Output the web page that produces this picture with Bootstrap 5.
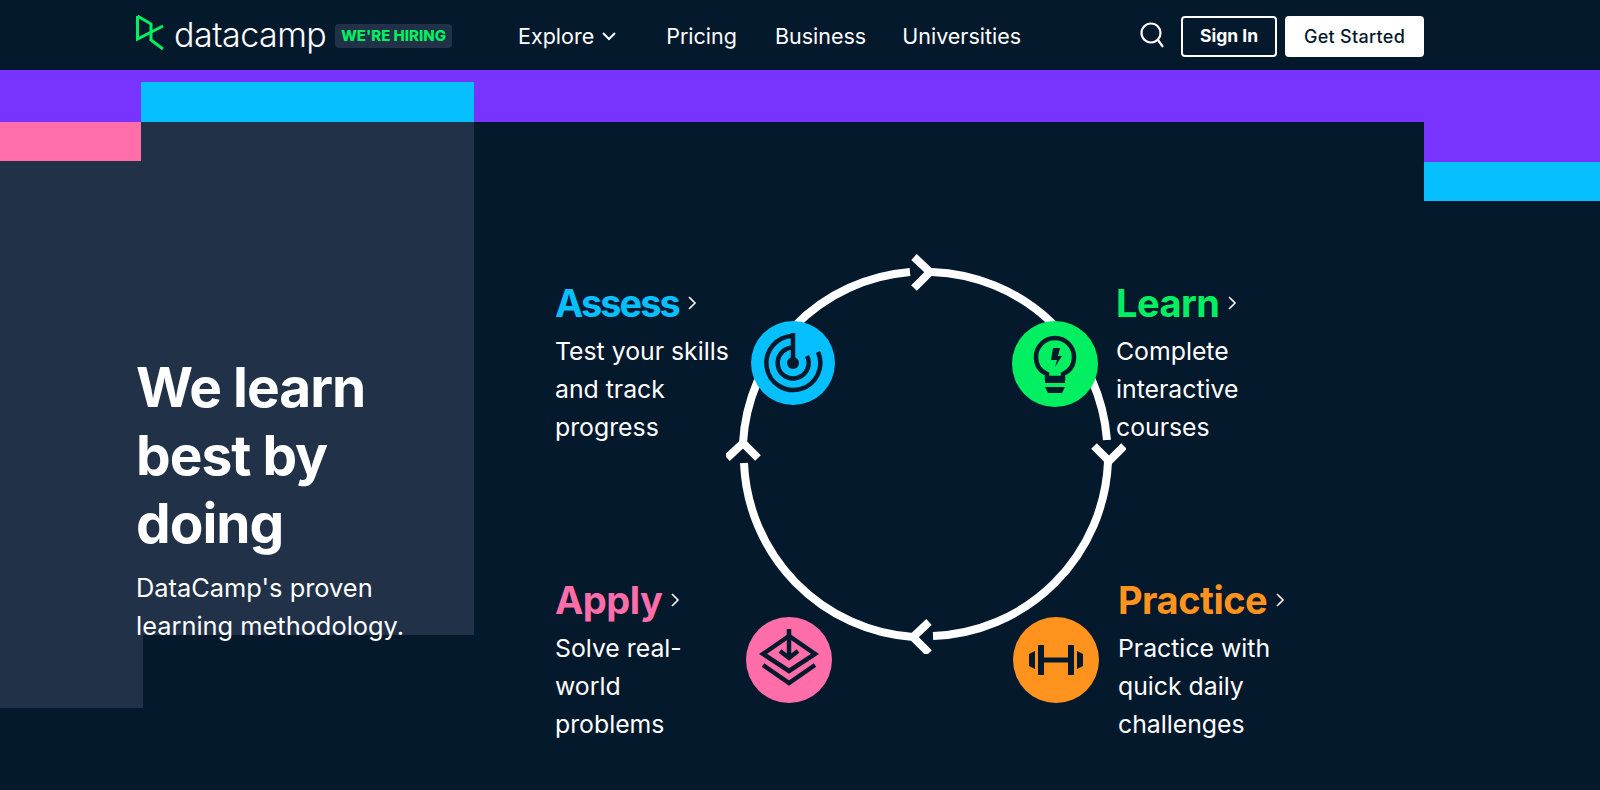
<!DOCTYPE html>
<html lang="en">
<head>
    <meta charset="UTF-8">
    <meta name="viewport" content="width=device-width, initial-scale=1.0">
    <title>DataCamp</title>
    <link href="https://cdn.jsdelivr.net/npm/bootstrap@5.3.0/dist/css/bootstrap.min.css" rel="stylesheet">
    <style>
        body { background: #05192d; color: #fff; font-family: "Inter", "Liberation Sans", sans-serif; overflow: hidden; }
        .top-bar { height: 70px; padding: 0 176px 0 136px; }
        .brand-word { font-weight: 300; font-size: 34px; letter-spacing: -0.5px; color: #fff; line-height: 1; margin-left: 8px; width: 151px; white-space: nowrap; }
        .hiring-tag { background: #213147; color: #03ef62; font-weight: 800; font-size: 15px; border-radius: 4px; height: 24px; margin: 2px 0 0 10px; width: 117px; white-space: nowrap; }
        .main-links { margin-left: 66px; gap: 36px; padding-top: 3px; }
        .main-links a { color: #fff; text-decoration: none; font-size: 21.5px; }
        .main-links a.link-pricing { margin: 0 2px 0 14px; }
        .btn-signin, .btn-start { height: 41px; border-radius: 4px; font-size: 17.5px; font-weight: 700; border: 2px solid #fff; padding: 0; margin-top: 2px; }
        .btn-signin { width: 96px; color: #fff; background: transparent; margin-left: 16px; }
        .btn-start { width: 139px; color: #05192d; background: #fff; margin-left: 8px; font-size: 18px; font-weight: 500; letter-spacing: .3px; }
        .hero-area {
            height: 720px;
            background-repeat: no-repeat;
            background-image:
                linear-gradient(#05bfff, #05bfff),
                linear-gradient(#ff6ea9, #ff6ea9),
                linear-gradient(#05bfff, #05bfff),
                linear-gradient(#7933ff, #7933ff),
                linear-gradient(#7933ff, #7933ff),
                linear-gradient(#213147, #213147),
                linear-gradient(#213147, #213147);
            background-size: 333px 40px, 141px 39px, 176px 39px, 100% 52px, 176px 92px, 333px 513px, 143px 547px;
            background-position: 141px 12px, 0 52px, 1424px 92px, 0 0, 1424px 0, 141px 52px, 0 91px;
        }
        .intro-col { width: 540px; padding: 283px 0 0 136px; }
        .intro-title { font-size: 55px; font-weight: 700; letter-spacing: -1px; line-height: 68px; margin: 0 0 12px; }
        .intro-text { font-size: 25.4px; line-height: 38px; margin: 0; white-space: nowrap; }
        .cycle-canvas { width: 800px; height: 720px; }
        .cycle-ring { left: 186px; top: 184px; }
        .cycle-badge { width: 86px; height: 86px; }
        .badge-assess { left: 211px; top: 251px; width: 84px; height: 84px; }
        .badge-learn { left: 472px; top: 251px; }
        .badge-apply { left: 206px; top: 547px; }
        .badge-practice { left: 473px; top: 547px; }
        .cycle-step { width: 220px; }
        .step-assess { left: 15px; top: 208px; }
        .step-learn { left: 576px; top: 208px; }
        .step-apply { left: 15px; top: 505px; }
        .step-practice { left: 578px; top: 505px; }
        .step-name { font-size: 38px; font-weight: 700; letter-spacing: -0.5px; line-height: 50px; margin: 0 0 4px; }
        .step-text { font-size: 24.8px; line-height: 38px; margin: 0; white-space: nowrap; }
        .tone-assess { color: #05bfff; letter-spacing: -2px; }
        .tone-learn { color: #03ef62; }
        .tone-apply { color: #ff6ea9; }
        .tone-practice { color: #ff931e; }
    </style>
</head>
<body>
    <nav class="top-bar d-flex align-items-center">
        <svg width="30" height="42" viewBox="0 0 30 42" fill="none" stroke="#03ef62" stroke-width="3">
            <path d="M1.5 2V25L27 12"/>
            <path d="M1.5 2L15 10V26L27 35"/>
        </svg>
        <span class="brand-word">datacamp</span>
        <span class="hiring-tag d-flex align-items-center justify-content-center">WE'RE HIRING</span>
        <div class="main-links d-flex align-items-center">
            <a href="#" class="d-flex align-items-center gap-2">Explore
                <svg width="14" height="9" viewBox="0 0 14 9" fill="none" stroke="#fff" stroke-width="2"><path d="M1 1L7 7L13 1"/></svg>
            </a>
            <a href="#" class="link-pricing">Pricing</a>
            <a href="#">Business</a>
            <a href="#">Universities</a>
        </div>
        <svg class="ms-auto" width="26" height="28" viewBox="0 0 26 28" fill="none" stroke="#fff" stroke-width="2.2">
            <circle cx="12" cy="12" r="9.5"/><path d="M19 19L24 26"/>
        </svg>
        <button class="btn-signin">Sign In</button>
        <button class="btn-start">Get Started</button>
    </nav>

    <section class="hero-area d-flex">
        <div class="intro-col">
            <h1 class="intro-title">We learn<br>best by<br>doing</h1>
            <p class="intro-text">DataCamp's proven<br>learning methodology.</p>
        </div>
        <div class="cycle-canvas position-relative">
            <svg class="cycle-ring position-absolute" width="400" height="400" viewBox="726 254 400 400" fill="none" stroke="#fff" stroke-width="8">
                <path d="M932 272A182 182 0 0 1 1107 440"/>
                <path d="M1108 462A182 182 0 0 1 933 636"/>
                <path d="M913 637A182 182 0 0 1 744 463"/>
                <path d="M743 443A182 182 0 0 1 910 272"/>
                <path d="M914 257L930 272L914 288"/>
                <path d="M1094 446L1109 461L1124 446"/>
                <path d="M929 622L913 637L929 653"/>
                <path d="M727 458L743 443L758 458"/>
            </svg>

            <svg class="cycle-badge position-absolute badge-assess" viewBox="-42 -42 84 84">
                <circle r="42" fill="#05bfff"/>
                <g fill="none" stroke="#05192d" stroke-width="4.5">
                    <path d="M0 -27A27 27 0 1 0 25 -11"/>
                    <path d="M0 -15.5A15.5 15.5 0 1 0 14 -7"/>
                    <path d="M0 -30V0"/>
                </g>
                <circle r="6" fill="#05192d"/>
            </svg>
            <svg class="cycle-badge position-absolute badge-learn" viewBox="-43 -43 86 86">
                <circle r="43" fill="#03ef62"/>
                <path d="M-8 14V10C-15 7 -19 1 -19 -7A19 19 0 0 1 19 -7C19 1 15 7 8 10V14Z" fill="none" stroke="#05192d" stroke-width="4.5"/>
                <path d="M-10 14H10V19H-10Z M-10 23H10L7 29H-7Z" fill="#05192d"/>
                <path d="M-2 -16H5L3 -8H7L0 3L2 -4H-4Z" fill="#05192d"/>
            </svg>
            <svg class="cycle-badge position-absolute badge-apply" viewBox="-43 -43 86 86">
                <circle r="43" fill="#ff6ea9"/>
                <g fill="none" stroke="#05192d" stroke-width="4.5">
                    <path d="M0 -24L-26 -6L0 11L26 -6Z"/>
                    <path d="M-26 5L0 23L26 5"/>
                    <path d="M0 -31V-2"/>
                    <path d="M-9 -9L0 -2L9 -9"/>
                </g>
            </svg>
            <svg class="cycle-badge position-absolute badge-practice" viewBox="-43 -43 86 86">
                <circle r="43" fill="#ff931e"/>
                <g fill="#05192d">
                    <rect x="-18" y="-15" width="6" height="30"/>
                    <rect x="12" y="-15" width="6" height="30"/>
                    <rect x="-13" y="-2.5" width="26" height="5"/>
                    <path d="M-21 -9V9L-27 6V-6Z"/>
                    <path d="M21 -9V9L27 6V-6Z"/>
                </g>
            </svg>

            <div class="cycle-step position-absolute step-assess">
                <h2 class="step-name tone-assess d-flex align-items-center gap-2">Assess
                    <svg width="10" height="14" viewBox="0 0 10 14" fill="none" stroke="#fff" stroke-width="1.6"><path d="M2 1L8 7L2 13"/></svg>
                </h2>
                <p class="step-text">Test your skills<br>and track<br>progress</p>
            </div>
            <div class="cycle-step position-absolute step-learn">
                <h2 class="step-name tone-learn d-flex align-items-center gap-2">Learn
                    <svg width="10" height="14" viewBox="0 0 10 14" fill="none" stroke="#fff" stroke-width="1.6"><path d="M2 1L8 7L2 13"/></svg>
                </h2>
                <p class="step-text">Complete<br>interactive<br>courses</p>
            </div>
            <div class="cycle-step position-absolute step-apply">
                <h2 class="step-name tone-apply d-flex align-items-center gap-2">Apply
                    <svg width="10" height="14" viewBox="0 0 10 14" fill="none" stroke="#fff" stroke-width="1.6"><path d="M2 1L8 7L2 13"/></svg>
                </h2>
                <p class="step-text">Solve real-<br>world<br>problems</p>
            </div>
            <div class="cycle-step position-absolute step-practice">
                <h2 class="step-name tone-practice d-flex align-items-center gap-2">Practice
                    <svg width="10" height="14" viewBox="0 0 10 14" fill="none" stroke="#fff" stroke-width="1.6"><path d="M2 1L8 7L2 13"/></svg>
                </h2>
                <p class="step-text">Practice with<br>quick daily<br>challenges</p>
            </div>
        </div>
    </section>

    <script src="https://cdn.jsdelivr.net/npm/bootstrap@5.3.0/dist/js/bootstrap.bundle.min.js"></script>
</body>
</html>
